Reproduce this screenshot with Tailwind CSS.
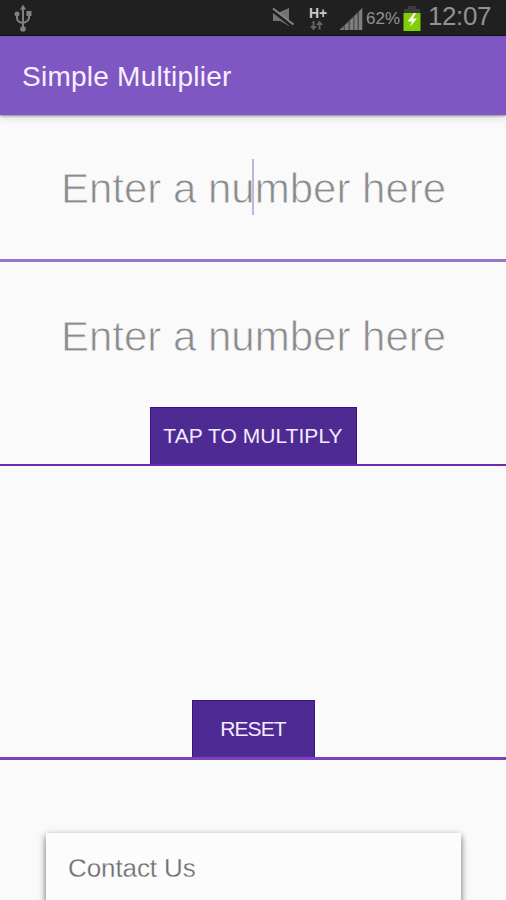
<!DOCTYPE html>
<html lang="en">
<head>
<meta charset="utf-8">
<title>Simple Multiplier</title>
<script src="https://cdn.jsdelivr.net/npm/@tailwindcss/browser@4"></script>
</head>
<body class="w-[506px] h-[900px] overflow-hidden bg-[#fafafa] font-['Liberation_Sans',Arial,sans-serif] flex flex-col">
<div class="h-9 shrink-0 bg-[#202020] border-b border-[#101510] flex items-start text-[#929292]">
  <svg class="ml-[13px] mt-[4px] shrink-0" width="20" height="28" viewBox="0 0 20 28" fill="none" stroke="#808080" stroke-width="2"><path d="M10 4V24M4 11V14Q4 18 10 19M16 10V14Q16 17 10 19"/><path d="M7 5.500L10 0.500L13 5.500Z" fill="#808080" stroke="none"/><circle cx="10" cy="25" r="2.800" fill="#808080" stroke="none"/><circle cx="4" cy="10" r="2.500" fill="#808080" stroke="none"/><path d="M13.500 7h5v5h-5z" fill="#808080" stroke="none"/></svg>
  <svg class="ml-[238px] mt-[6px] shrink-0" width="25" height="23" viewBox="0 0 25 23"><path d="M2 6h7l9-4v18l-9-5H2z" fill="#737373"/><path d="M2 4.500L23 21" stroke="#202020" stroke-width="4"/><path d="M2 2.500L22.500 18.500" stroke="#838383" stroke-width="2.200"/></svg>
  <div class="ml-[13px] mt-[6px] w-[20px] shrink-0 flex flex-col">
    <span class="text-[14px] leading-[14px] font-bold text-[#c9c9c9] tracking-[-0.2px]">H+</span>
    <svg width="18" height="11" viewBox="0 0 18 11" fill="#636363"><path d="M3.500 1h2v5H8L4.500 10.500L1 6h2.500zM9.500 9.500h2V5H14L10.500 0.500L7 5h2.500z"/></svg>
  </div>
  <svg class="ml-[10px] mt-[8px] shrink-0" width="24" height="22" viewBox="0 0 24 22"><path d="M0 22L23 0V22Z" fill="#4b4b4b"/><path d="M1 22L4.500 18.600V22zM6 22V17.200l3.500-3.300V22zM11 22V12.400l3.300-3.100V22zM15.500 22V8.100l3-2.800V22zM20 22V3.800L23.300 0V22z" fill="#7e7e7e"/></svg>
  <span class="ml-[3px] mt-[10px] w-[36px] text-[17px] leading-[18px] tracking-[0.1px] shrink-0">62%</span>
  <svg class="ml-[1px] mt-[6px] shrink-0" width="18" height="25" viewBox="0 0 18 25"><path d="M5 0h8v3h4v5H1V3h4z" fill="#3d3d3d"/><path d="M0.500 7h17V25H.5z" fill="#83cc08"/><path d="M11 7L4.500 15.500h4.500l-2 5.500 7-8.500h-4L13 7z" fill="#f6fcec"/></svg>
  <span class="ml-[7px] mt-[2px] text-[26px] leading-[28px] tracking-[-0.4px] shrink-0">12:07</span>
</div>
<header class="h-[79px] shrink-0 bg-[#7e57c2] pl-[22px] flex items-center shadow-[0_1px_2px_rgba(0,0,0,0.4),0_3px_8px_rgba(0,0,0,0.12)]">
  <h1 class="text-[28px] leading-[32px] tracking-[0.25px] text-[#f7efff] pt-[3px]">Simple Multiplier</h1>
</header>
<div class="relative h-[147px] shrink-0 border-b-[3px] border-[#9575cd] text-center pt-[50px]">
  <p class="text-[42px] leading-[48px] pl-px text-[#8b8b8b] [-webkit-text-stroke:0.8px_#fafafa] whitespace-nowrap">Enter a number here</p>
  <i class="absolute left-[252px] top-[44px] w-[2px] h-[56px] bg-[#c0b3df]"></i>
</div>
<div class="h-[204px] shrink-0 border-b-[2px] border-[#6a2bb3] flex flex-col items-center pt-[51px]">
  <p class="text-[42px] leading-[48px] pl-px text-[#8b8b8b] [-webkit-text-stroke:0.8px_#fafafa] whitespace-nowrap">Enter a number here</p>
  <button class="mt-auto w-[207px] h-[57px] shrink-0 bg-[#4e2b93] border border-b-0 border-[#3b1185] text-[#f3eaff] text-[21px] tracking-[0.05px] whitespace-nowrap">TAP TO MULTIPLY</button>
</div>
<div class="h-[294px] shrink-0 border-b-[3px] border-[#7a43bd] flex flex-col items-center justify-end">
  <button class="w-[123px] h-[57px] shrink-0 bg-[#4e2b93] border border-b-0 border-[#3b1185] text-[#f3eaff] text-[21px] tracking-[-0.9px]">RESET</button>
</div>
<section class="mt-[73px] ml-[46px] w-[415px] h-[100px] shrink-0 bg-[#fcfcfc] shadow-[0_3px_7px_rgba(0,0,0,0.6)] pl-[22px] pt-[20px]">
  <p class="text-[26px] leading-[30px] text-[#6c6c6c] tracking-[-0.1px] [-webkit-text-stroke:0.3px_#fcfcfc]">Contact Us</p>
</section>
</body>
</html>
